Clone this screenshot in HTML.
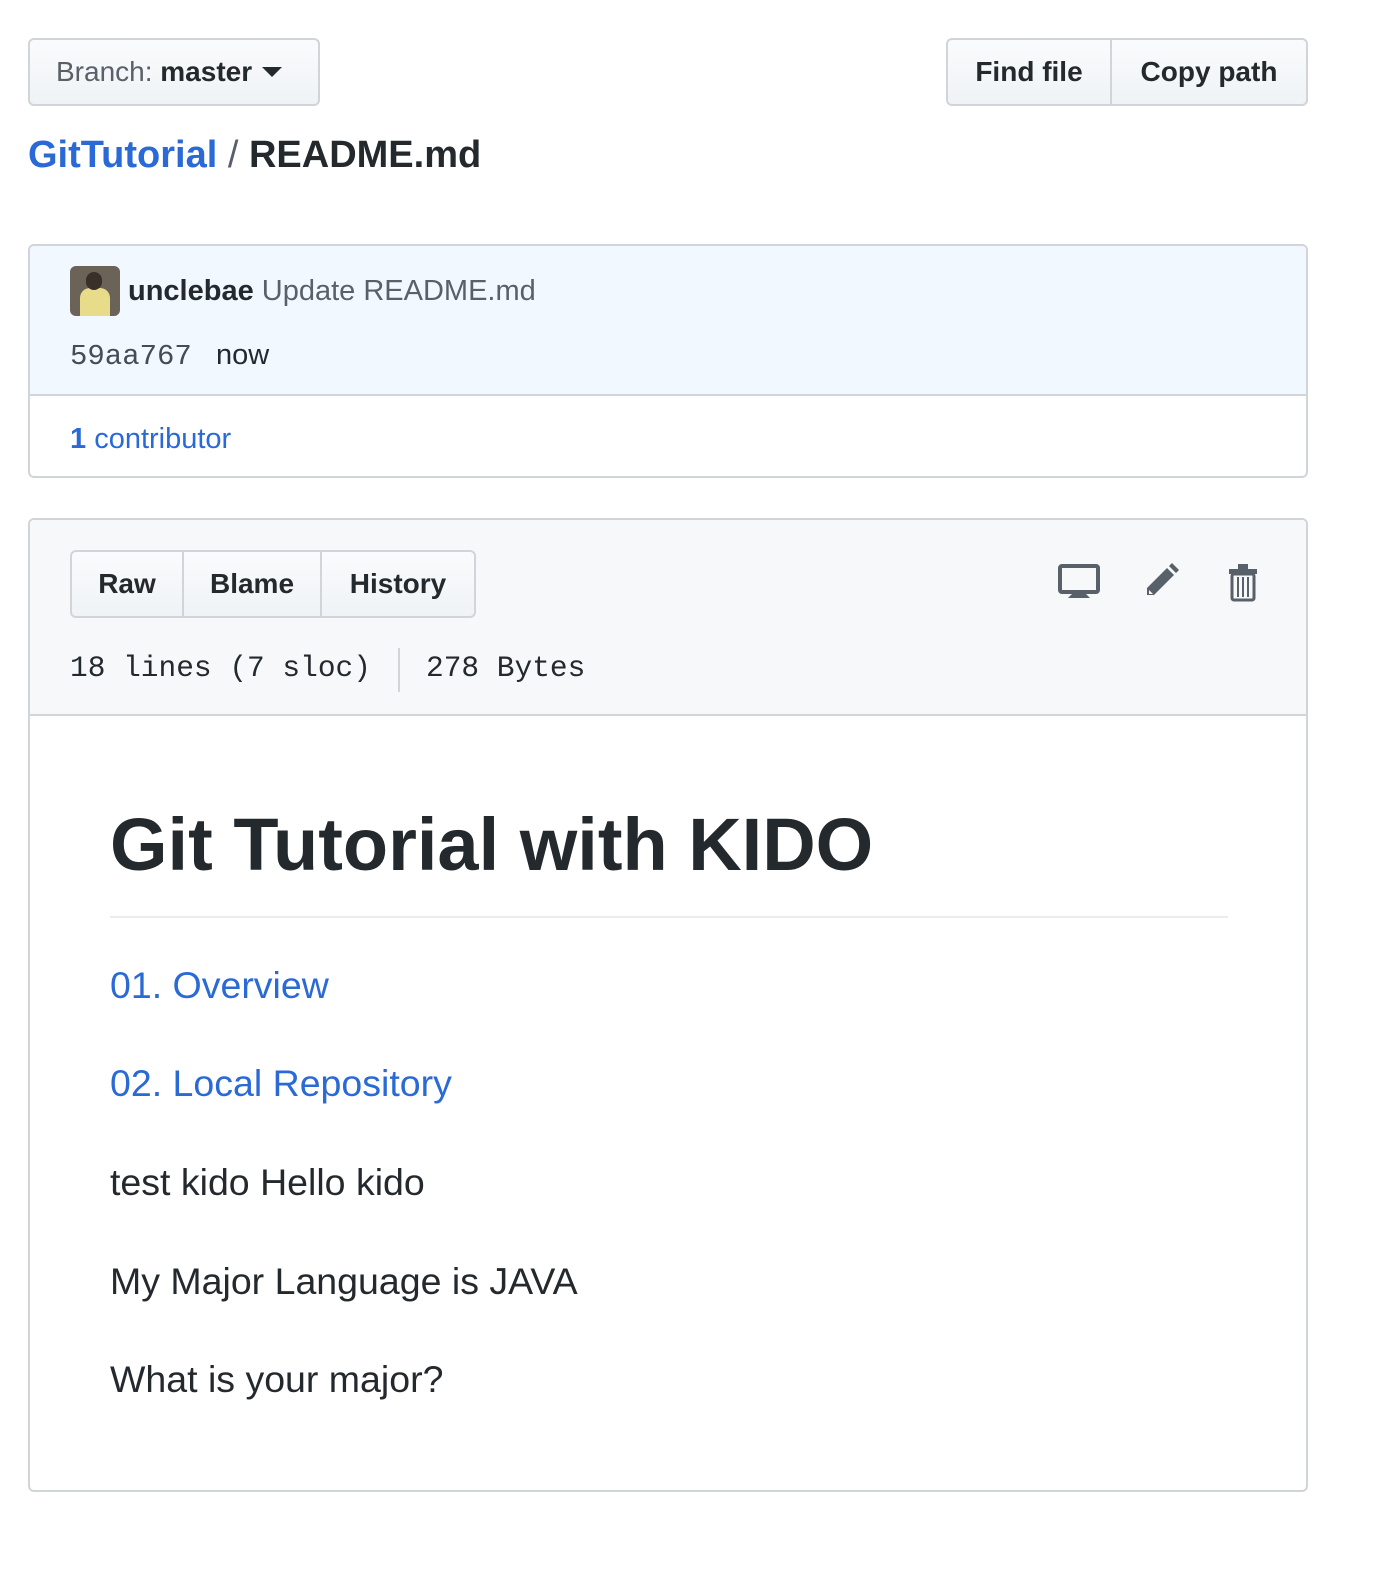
<!DOCTYPE html>
<html><head><meta charset="utf-8"><style>
*{box-sizing:border-box;margin:0;padding:0}
html,body{width:1386px;height:1594px;overflow:hidden}
body{background:#fff;font-family:"Liberation Sans",sans-serif;color:#24292e;position:relative}
.abs{position:absolute}
.btn{position:absolute;border:2px solid #d1d5da;background:linear-gradient(#fafbfc,#eff3f6);border-radius:6px;font-size:28px;font-weight:bold;display:flex;align-items:center;justify-content:center}
.mono{font-family:"Liberation Mono",monospace}
</style></head><body>
<div class="btn" style="left:28px;top:38px;width:292px;height:68px;justify-content:flex-start;padding-left:26px"><span style="color:#586069;font-weight:normal">Branch:&nbsp;</span>master<svg width="20" height="12" style="margin-left:10px"><path d="M0 1h20L10 11z" fill="#24292e"/></svg></div>
<div class="btn" style="left:946px;top:38px;width:166px;height:68px;border-radius:6px 0 0 6px">Find file</div>
<div class="btn" style="left:1110px;top:38px;width:198px;height:68px;border-radius:0 6px 6px 0">Copy path</div>
<div class="abs" style="left:28px;top:134px;font-size:38px;font-weight:bold"><span style="color:#2a6ad6">GitTutorial</span> <span style="color:#586069;font-weight:normal">/</span> README.md</div>

<div class="abs" style="left:28px;top:244px;width:1280px;height:234px;border:2px solid #d1d5da;border-radius:6px;overflow:hidden">
<div style="height:150px;background:#f1f8ff;border-bottom:2px solid #d1d5da;position:relative">
<div class="abs" style="left:40px;top:20px;width:50px;height:50px;border-radius:6px;background:#6b6258;overflow:hidden"><div style="position:absolute;left:10px;top:22px;width:30px;height:30px;background:#e8dc8a;border-radius:10px 10px 0 0"></div><div style="position:absolute;left:16px;top:6px;width:16px;height:18px;background:#3a302a;border-radius:8px"></div></div>
<div class="abs" style="left:98px;top:29px;font-size:29px"><b>unclebae</b> <span style="color:#586069">Update README.md</span></div>
<div class="abs" style="left:40px;top:93px;font-size:29px"><span class="mono" style="color:#444d56">59aa767</span>&nbsp;&nbsp;&nbsp;now</div>
</div>
<div class="abs" style="left:40px;top:177px;font-size:29px;color:#2a6ad6"><b>1</b> contributor</div>
</div>

<div class="abs" style="left:28px;top:518px;width:1280px;height:974px;border:2px solid #d1d5da;border-radius:6px;overflow:hidden">
<div style="height:196px;background:#f6f8fa;border-bottom:2px solid #d1d5da;position:relative">
<div class="btn" style="left:40px;top:30px;width:114px;height:68px;border-radius:6px 0 0 6px">Raw</div>
<div class="btn" style="left:152px;top:30px;width:140px;height:68px;border-radius:0">Blame</div>
<div class="btn" style="left:290px;top:30px;width:156px;height:68px;border-radius:0 6px 6px 0">History</div>
<div class="abs mono" style="left:40px;top:131px;font-size:29.5px;color:#24292e">18 lines (7 sloc)</div>
<div class="abs" style="left:368px;top:128px;width:2px;height:44px;background:#d1d5da"></div>
<div class="abs mono" style="left:396px;top:131px;font-size:29.5px">278 Bytes</div>
<svg class="abs" style="left:1028px;top:44px" width="42" height="36" viewBox="0 0 42 36"><rect x="2" y="2" width="38" height="26" rx="2" fill="none" stroke="#586069" stroke-width="4"/><path d="M10 34h22l-6-6h-10z" fill="#586069"/></svg>
<svg class="abs" style="left:1112px;top:40px" width="40" height="40" viewBox="0 0 40 40"><path d="M30 3l7 7-3 3-7-7zM25 8l7 7-20 20H5v-7z" fill="#586069"/><path d="M7 30v4h4z" fill="#f6f8fa"/></svg>
<svg class="abs" style="left:1196px;top:42px" width="34" height="40" viewBox="0 0 34 40"><path d="M3 7h28v5H3zM12 2h10v5H12z" fill="#586069"/><rect x="6" y="12" width="22" height="26" rx="2" fill="none" stroke="#586069" stroke-width="3"/><path d="M12 15v20M17 15v20M22 15v20" stroke="#586069" stroke-width="2"/></svg>
</div>
<div class="abs" style="left:80px;top:282px;font-size:74px;font-weight:bold;letter-spacing:0">Git Tutorial with KIDO</div>
<div class="abs" style="left:80px;top:396px;width:1118px;height:2px;background:#eaecef"></div>
<div class="abs" style="left:80px;top:444px;font-size:37.5px;color:#2a6ad6">01. Overview</div>
<div class="abs" style="left:80px;top:542px;font-size:37.5px;color:#2a6ad6">02. Local Repository</div>
<div class="abs" style="left:80px;top:641px;font-size:37.5px">test kido Hello kido</div>
<div class="abs" style="left:80px;top:740px;font-size:37.5px">My Major Language is JAVA</div>
<div class="abs" style="left:80px;top:838px;font-size:37.5px">What is your major?</div>
</div>
</body></html>
